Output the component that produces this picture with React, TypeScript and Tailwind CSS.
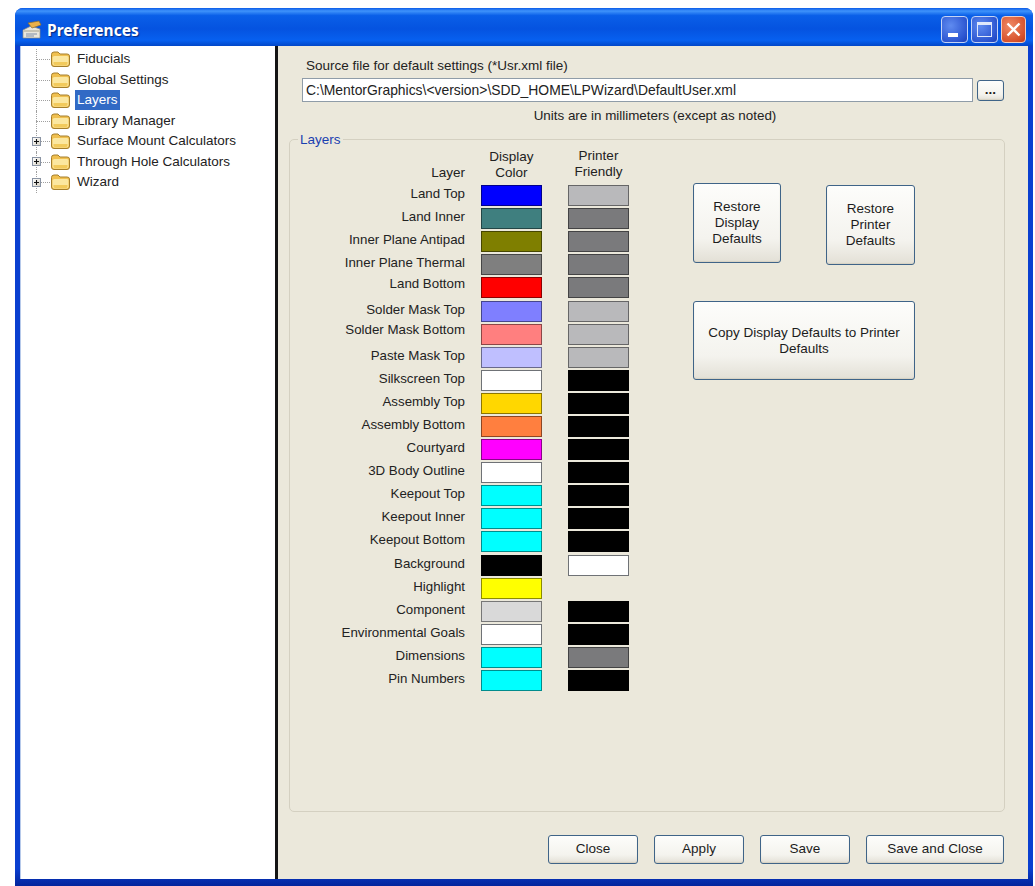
import React from "react";

const rows: { name: string; d: string; p: string | null; lift?: boolean }[] = [
  { name: "Land Top", d: "#0000ff", p: "#b9b9bb" },
  { name: "Land Inner", d: "#3f7f7f", p: "#7a7a7c" },
  { name: "Inner Plane Antipad", d: "#7f7f00", p: "#7a7a7c" },
  { name: "Inner Plane Thermal", d: "#7f7f7f", p: "#7a7a7c" },
  { name: "Land Bottom", d: "#ff0000", p: "#7a7a7c", lift: true },
  { name: "Solder Mask Top", d: "#7f7fff", p: "#b9b9bb" },
  { name: "Solder Mask Bottom", d: "#ff7f7f", p: "#b9b9bb", lift: true },
  { name: "Paste Mask Top", d: "#bfbfff", p: "#b9b9bb" },
  { name: "Silkscreen Top", d: "#ffffff", p: "#000000" },
  { name: "Assembly Top", d: "#ffd700", p: "#000000" },
  { name: "Assembly Bottom", d: "#ff7f3f", p: "#000000" },
  { name: "Courtyard", d: "#ff00ff", p: "#000000" },
  { name: "3D Body Outline", d: "#ffffff", p: "#000000" },
  { name: "Keepout Top", d: "#00ffff", p: "#000000" },
  { name: "Keepout Inner", d: "#00ffff", p: "#000000" },
  { name: "Keepout Bottom", d: "#00ffff", p: "#000000" },
  { name: "Background", d: "#000000", p: "#ffffff" },
  { name: "Highlight", d: "#ffff00", p: null },
  { name: "Component", d: "#d9d9d9", p: "#000000" },
  { name: "Environmental Goals", d: "#ffffff", p: "#000000" },
  { name: "Dimensions", d: "#00ffff", p: "#7a7a7c" },
  { name: "Pin Numbers", d: "#00ffff", p: "#000000" },
];

const tree: { name: string; plus?: boolean; sel?: boolean }[] = [
  { name: "Fiducials" },
  { name: "Global Settings" },
  { name: "Layers", sel: true },
  { name: "Library Manager" },
  { name: "Surface Mount Calculators", plus: true },
  { name: "Through Hole Calculators", plus: true },
  { name: "Wizard", plus: true },
];

function edge(hex: string) {
  if (hex === "#ffffff") return "#6f7276";
  const n = parseInt(hex.slice(1), 16);
  const c = [(n >> 16) & 255, (n >> 8) & 255, n & 255].map((v) => Math.round(v * 0.55));
  return `rgb(${c[0]},${c[1]},${c[2]})`;
}

function Folder() {
  return (
    <svg width="21" height="18" viewBox="0 0 21 18" className="shrink-0">
      <path d="M1.5 4.5 Q1.5 2 4 2 H8 L10 4 H17 Q19.5 4 19.5 6 V14 Q19.5 16.5 17 16.5 H4 Q1.5 16.5 1.5 14 Z" fill="#f0c050" stroke="#a57f2c" strokeWidth="1" />
      <path d="M2.5 7.5 Q2.5 6 4.5 6 H17 Q18.5 6 18.5 7.5 V13.5 Q18.5 15.5 16.5 15.5 H4.5 Q2.5 15.5 2.5 13.5 Z" fill="#fbe7a0" />
      <path d="M3.5 12 H17.5 V13.5 Q17.5 15 16 15 H5 Q3.5 15 3.5 13.5 Z" fill="#f2ca5c" />
    </svg>
  );
}

function Plus() {
  return (
    <span className="relative z-10 flex h-[9px] w-[9px] shrink-0 items-center justify-center border border-[#8a94a4] bg-[linear-gradient(135deg,#ffffff,#d8d4c8)]">
      <svg width="7" height="7" viewBox="0 0 7 7">
        <path d="M1 3.5 H6 M3.5 1 V6" stroke="#111" strokeWidth="1.1" />
      </svg>
    </span>
  );
}

function Btn({ className, children }: { className: string; children: React.ReactNode }) {
  return (
    <button className={`flex items-center justify-center rounded-[3px] border border-[#3f6488] bg-[linear-gradient(180deg,#fdfdfb_0%,#f4f3ee_70%,#e3e0d6_100%)] text-center text-[#1c1c1c] shadow-[inset_0_-1px_1px_#d6d2c4] ${className}`}>
      {children}
    </button>
  );
}

function Swatch({ color }: { color: string }) {
  return (
    <span
      className="block h-[21px] w-[61px] border"
      style={{ backgroundColor: color, borderColor: edge(color) }}
    />
  );
}

export default function App() {
  return (
    <div
      className="flex h-[886px] w-[1035px] overflow-hidden bg-white pl-[15px] pr-[2px] pt-[8px] text-[13.5px] leading-[16px] text-[#222222]"
      style={{ fontFamily: '"Liberation Sans", Arial, sans-serif' }}
    >
      <div className="flex min-w-0 flex-1 flex-col overflow-hidden rounded-t-[8px] bg-[linear-gradient(180deg,#0a3fd0_0%,#0a3fd0_98%,#03249c_100%)]">
        <div className="flex h-[38px] shrink-0 items-center bg-[linear-gradient(180deg,#0a5be8_0%,#3f93fb_8%,#0a5fe8_20%,#0553e0_55%,#0760f0_85%,#0247c8_100%)] pl-[6px] pr-[7px] pt-[5px]">
          <svg width="22" height="22" viewBox="0 0 22 22" className="shrink-0">
            <path d="M2 11 L10 7 L19 10 V19 H2 Z" fill="#e9e6dc" stroke="#8f8b7c" strokeWidth=".7" />
            <path d="M2 11 H19 V13 H2 Z" fill="#c7c3b3" />
            <path d="M7 4 L18 2 L20 6 L11 9 Z" fill="#e9b04a" stroke="#8c6d2c" strokeWidth=".7" />
            <path d="M5 15 H16 M5 17 H13" stroke="#7f8ea8" strokeWidth="1" />
          </svg>
          <span
            className="ml-[4px] text-[15.5px] font-bold text-white [text-shadow:1px_1px_1px_#0a2a80]"
            style={{ fontFamily: '"Noto Sans", "Liberation Sans", sans-serif' }}
          >
            Preferences
          </span>
          <div className="ml-auto flex items-center gap-[3px]">
            <span className="flex h-[27px] w-[27px] items-end rounded-[4px] border border-[#c5d4f5] bg-[radial-gradient(circle_at_35%_35%,#5f8bf0,#2a53cf_75%,#1c3fb4)] pb-[5px] pl-[6px]">
              <span className="block h-[4px] w-[10px] bg-white" />
            </span>
            <span className="flex h-[27px] w-[27px] items-center justify-center rounded-[4px] border border-[#c5d4f5] bg-[radial-gradient(circle_at_35%_35%,#5f8bf0,#2a53cf_75%,#1c3fb4)]">
              <span className="block h-[15px] w-[15px] border-[1px] border-t-[3px] border-[#dfe8fb]" />
            </span>
            <span className="flex h-[27px] w-[25px] items-center justify-center rounded-[4px] border border-[#f3cdbf] bg-[radial-gradient(circle_at_35%_35%,#ef8a66,#d8532e_70%,#bd3c18)]">
              <svg width="17" height="17" viewBox="0 0 17 17">
                <path d="M2.5 2.5 L14.5 14.5 M14.5 2.5 L2.5 14.5" stroke="#fff" strokeWidth="2.4" />
              </svg>
            </span>
          </div>
        </div>

        <div className="flex min-h-0 flex-1 px-[5px] pb-[7px]">
          <div className="flex w-[255px] shrink-0 flex-col border-l border-l-[#b6c9ea] bg-white pl-[11px] pt-[3px]">
            {tree.map((t) => (
              <div key={t.name} className="flex h-[20.5px] items-center">
                <span className="relative flex h-full w-[18px] shrink-0 items-center">
                  <span className="absolute left-[4px] top-0 h-full border-l border-dotted border-[#a0a0a0]" />
                  <span className="absolute left-[4px] top-1/2 w-[14px] border-t border-dotted border-[#a0a0a0]" />
                  {t.plus ? <Plus /> : null}
                </span>
                <Folder />
                <span className={`ml-[4px] flex h-[20px] items-center px-[2px] ${t.sel ? "bg-[#316ac5] text-white" : ""}`}>{t.name}</span>
              </div>
            ))}
          </div>
          <div className="w-[3px] shrink-0 bg-[#141414]" />
          <div className="flex min-w-0 flex-1 flex-col bg-[#ebe8db]">
            <div className="ml-[28px] mt-[12px] h-[16px]">Source file for default settings (*Usr.xml file)</div>
            <div className="ml-[24px] mt-[4px] flex items-center">
              <div className="flex h-[24px] w-[671px] items-center border border-[#8f9ca8] bg-white pl-[3px] text-[13.9px]">
                {"C:\\MentorGraphics\\<version>\\SDD_HOME\\LPWizard\\DefaultUser.xml"}
              </div>
              <Btn className="ml-[4px] h-[21px] w-[27px] font-bold leading-[12px]">...</Btn>
            </div>
            <div className="ml-[11px] mt-[6px] h-[16px] w-[716px] pl-[16px] text-center text-[13.4px]">Units are in millimeters (except as noted)</div>

            <div className="relative ml-[11px] mt-[15px] flex h-[673px] w-[716px] rounded-[5px] border border-[#d4d0c1]">
              <span className="absolute -top-[8px] left-[8px] bg-[#ebe8db] px-[2px] text-[#1a3fb0]">Layers</span>
              <div className="flex w-[339px] shrink-0 flex-col pt-[9px]">
                <div className="flex h-[35px] items-end pb-[3px]">
                  <div className="w-[175px] text-right">Layer</div>
                  <div className="ml-[16px] w-[61px] text-center">Display<br />Color</div>
                  <div className="-mt-[2px] mb-[1px] ml-[26px] w-[61px] text-center">Printer<br />Friendly</div>
                </div>
                {rows.map((r) => (
                  <div key={r.name} className="flex h-[23.1px] items-center">
                    <div className={`w-[175px] text-right text-[13.3px] ${r.lift ? "pb-[8px]" : "pb-[3px]"}`}>{r.name}</div>
                    <div className="ml-[16px]"><Swatch color={r.d} /></div>
                    <div className="ml-[26px]">{r.p ? <Swatch color={r.p} /> : null}</div>
                  </div>
                ))}
              </div>
              <div className="ml-[64px] flex w-[222px] flex-col pt-[43px]">
                <div className="flex items-start justify-between">
                  <Btn className="h-[80px] w-[88px]"><span>Restore<br />Display<br />Defaults</span></Btn>
                  <Btn className="mt-[2px] h-[80px] w-[89px]"><span>Restore<br />Printer<br />Defaults</span></Btn>
                </div>
                <Btn className="mt-[36px] h-[79px] w-[222px]"><span>Copy Display Defaults to Printer<br />Defaults</span></Btn>
              </div>
            </div>

            <div className="mt-[23px] flex justify-end gap-[16px] pr-[24px]">
              <Btn className="h-[29px] w-[90px] pb-[1px]">Close</Btn>
              <Btn className="h-[29px] w-[90px] pb-[1px]">Apply</Btn>
              <Btn className="h-[29px] w-[90px] pb-[1px]">Save</Btn>
              <Btn className="h-[29px] w-[138px] pb-[1px]">Save and Close</Btn>
            </div>
          </div>
        </div>
      </div>
    </div>
  );
}
